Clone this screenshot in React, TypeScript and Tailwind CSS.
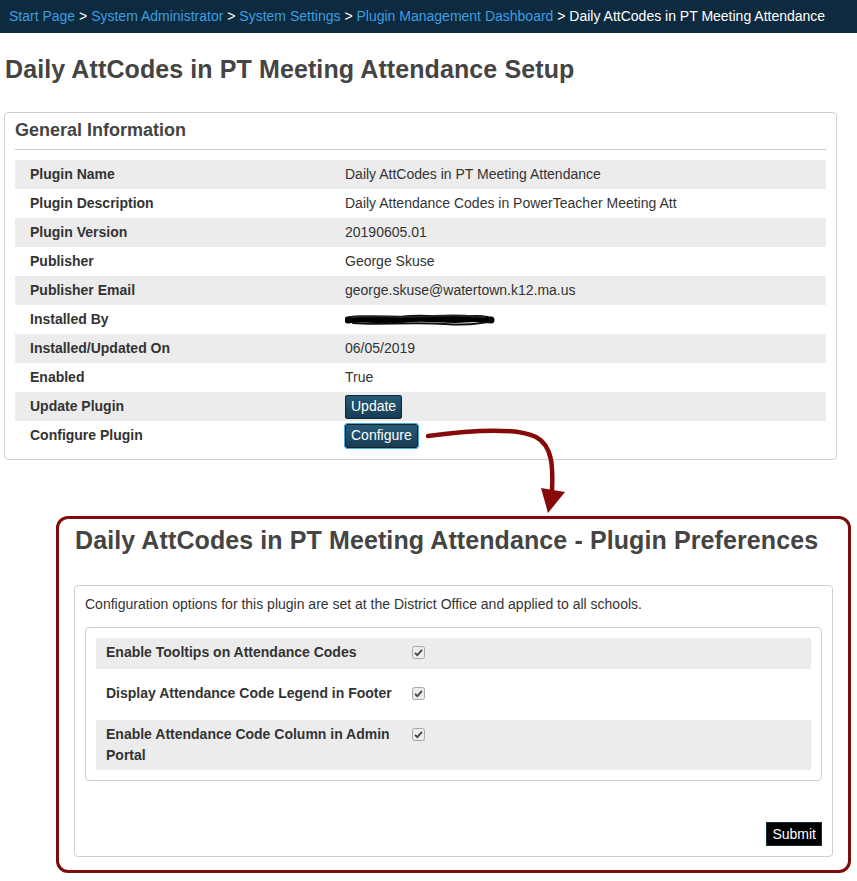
import React from "react";

const crumbs = [
  "Start Page",
  "System Administrator",
  "System Settings",
  "Plugin Management Dashboard",
];

function Redacted() {
  return (
    <svg width="150" height="16" viewBox="0 0 150 16" className="block">
      <path
        d="M3 8 C 20 5, 40 10, 60 7 S 100 9, 120 7 S 140 8, 146 8"
        stroke="#000"
        strokeWidth="7"
        strokeLinecap="round"
        fill="none"
      />
      <path
        d="M6 5 C 30 3, 60 6, 90 4 S 130 5, 140 5"
        stroke="#222"
        strokeWidth="2"
        strokeLinecap="round"
        fill="none"
      />
      <path
        d="M8 11 C 30 13, 70 10, 100 12 S 130 11, 144 10"
        stroke="#111"
        strokeWidth="2"
        strokeLinecap="round"
        fill="none"
      />
    </svg>
  );
}

function Btn({ label, focus }: { label: string; focus?: boolean }) {
  return (
    <span
      className={
        "inline-flex items-center rounded-[2px] border border-[#0b2637] bg-gradient-to-b from-[#275a76] to-[#173d54] px-[5px] text-[14px] text-white " +
        (focus ? "h-[24px] outline outline-1 outline-[#4aa8e6]" : "h-[24px]")
      }
    >
      {label}
    </span>
  );
}

function Check() {
  return (
    <svg width="13" height="13" viewBox="0 0 13 13" className="block">
      <rect x="0.5" y="0.5" width="12" height="12" rx="2" fill="#ececec" stroke="#a8a8a8" />
      <path d="M3 6.8 L5.3 9.2 L10 3.8" stroke="#444" strokeWidth="1.8" fill="none" />
    </svg>
  );
}

export default function App() {
  const rows: { label: string; value: React.ReactNode }[] = [
    { label: "Plugin Name", value: "Daily AttCodes in PT Meeting Attendance" },
    {
      label: "Plugin Description",
      value: "Daily Attendance Codes in PowerTeacher Meeting Att",
    },
    { label: "Plugin Version", value: "20190605.01" },
    { label: "Publisher", value: "George Skuse" },
    { label: "Publisher Email", value: "george.skuse@watertown.k12.ma.us" },
    { label: "Installed By", value: <Redacted /> },
    { label: "Installed/Updated On", value: "06/05/2019" },
    { label: "Enabled", value: "True" },
    { label: "Update Plugin", value: <Btn label="Update" /> },
    { label: "Configure Plugin", value: <Btn label="Configure" focus /> },
  ];

  const prefs = [
    { label: "Enable Tooltips on Attendance Codes", cls: "h-[31px] pt-[4px] bg-[#ececec]" },
    { label: "Display Attendance Code Legend in Footer", cls: "h-[51px] pt-[14px]" },
    {
      label: "Enable Attendance Code Column in Admin Portal",
      cls: "h-[50px] pt-[4px] bg-[#ececec]",
    },
  ];

  return (
    <div className="relative min-h-[881px] w-[857px] bg-white font-['Liberation_Sans',Arial,sans-serif] text-[14px] text-[#333]">
      {/* breadcrumb */}
      <div className="flex h-[33px] items-center bg-[#0d2a3e] px-[9px] text-[14px]">
        {crumbs.map((c) => (
          <React.Fragment key={c}>
            <span className="text-[#3e9ee0]">{c}</span>
            <span className="whitespace-pre text-white"> &gt; </span>
          </React.Fragment>
        ))}
        <span className="text-white">Daily AttCodes in PT Meeting Attendance</span>
      </div>

      <h1 className="pl-[5px] pt-[23px] text-[25px] font-bold leading-[26px] tracking-[0.1px] text-[#444]">
        Daily AttCodes in PT Meeting Attendance Setup
      </h1>

      {/* general info */}
      <div className="ml-[4px] mt-[30px] w-[833px] rounded-[4px] border border-[#cfcfcf] px-[10px] pb-[9px] pt-[7px]">
        <h2 className="text-[18px] font-bold leading-[20px] text-[#444]">General Information</h2>
        <div className="mt-[9px] h-px bg-[#c8c8c8]" />
        <div className="mt-[10px]">
          {rows.map((r, i) => (
            <div
              key={r.label}
              className={"flex h-[29px] items-center " + (i % 2 === 0 ? "bg-[#ececec]" : "")}
            >
              <div className="w-[330px] pl-[15px] font-bold">{r.label}</div>
              <div>{r.value}</div>
            </div>
          ))}
        </div>
      </div>

      {/* preferences */}
      <div className="ml-[56px] mt-[56px] w-[795px] rounded-[12px] border-[3px] border-[#7e0b0b] pb-[13px] pl-[15px] pr-[15px] pt-[8px]">
        <h1 className="pl-[1px] text-[25px] font-bold leading-[26px] tracking-[0.1px] text-[#444]">
          Daily AttCodes in PT Meeting Attendance - Plugin Preferences
        </h1>
        <div className="mt-[32px] rounded-[4px] border border-[#cfcfcf] px-[10px] pb-[10px] pt-[8px]">
          <p className="leading-[20px]">
            Configuration options for this plugin are set at the District Office and applied to all schools.
          </p>
          <div className="mt-[13px] rounded-[4px] border border-[#cfcfcf] p-[10px]">
            {prefs.map((p) => (
              <div key={p.label} className={"flex items-start " + p.cls}>
                <div className="w-[316px] pl-[10px] font-bold leading-[21px]">{p.label}</div>
                <div className="pt-[4px]">
                  <Check />
                </div>
              </div>
            ))}
          </div>
          <div className="mt-[41px] flex justify-end">
            <span className="inline-flex h-[24px] items-center border border-[#1a2e3a] bg-black px-[5px] text-[14px] text-white">
              Submit
            </span>
          </div>
        </div>
      </div>

      {/* arrow overlay */}
      <svg
        className="pointer-events-none absolute left-0 top-0"
        width="857"
        height="881"
        viewBox="0 0 857 881"
      >
        <path
          d="M428 436 C 465 431, 515 427, 536 437 C 553 446, 553 468, 552 491"
          stroke="#860a0a"
          strokeWidth="4.5"
          fill="none"
          strokeLinecap="round"
        />
        <polygon points="541,488 565,492 548,513" fill="#860a0a" />
      </svg>
    </div>
  );
}
